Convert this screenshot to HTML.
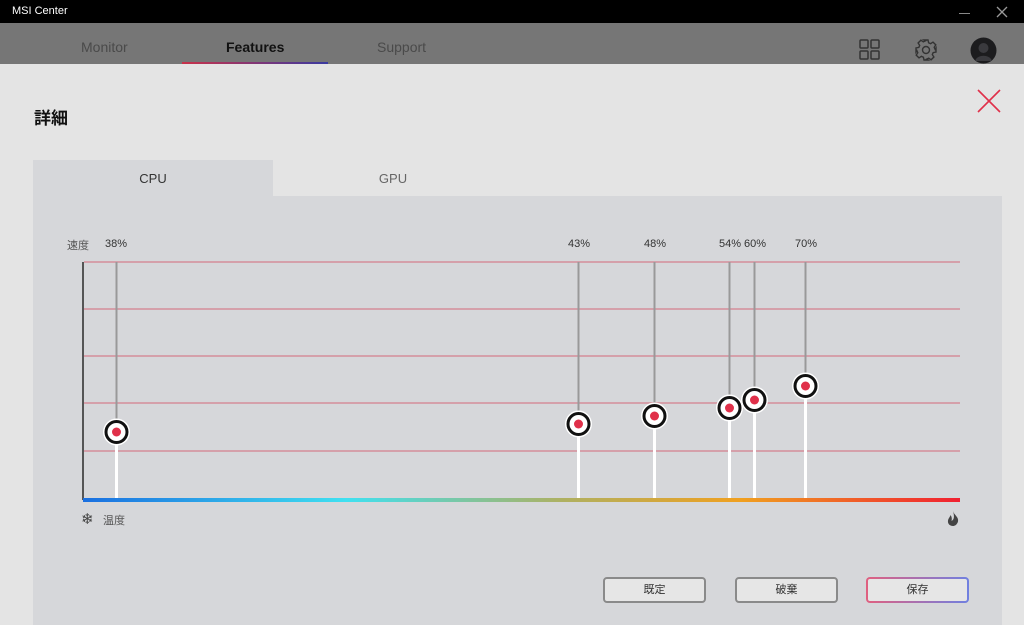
<!DOCTYPE html><html><head><meta charset="utf-8"><style>
*{margin:0;padding:0;box-sizing:border-box}
body{width:1024px;height:625px;overflow:hidden;background:#e4e4e4;font-family:"Liberation Sans","Noto Sans CJK JP",sans-serif;position:relative}
.a{position:absolute}
.g{position:absolute;left:84px;width:876px;height:2px;background:#d5a0aa}
.btn{position:absolute;top:577px;width:103px;height:26px;border:2px solid #8a8a8a;border-radius:4px;background:#e6e6e6;font-size:11px;color:#333;text-align:center;line-height:22px}
</style></head><body>
<div class="a" style="left:0;top:0;width:1024px;height:23px;background:#000"></div>
<div class="a" style="left:12px;top:5px;color:#fff;font-size:11px">MSI Center</div>
<div class="a" style="left:959px;top:13px;width:11px;height:1px;background:#888"></div>
<svg class="a" style="left:996px;top:6px" width="12" height="12"><path d="M1 1L11 11M11 1L1 11" stroke="#999" stroke-width="1.3"/></svg>
<div class="a" style="left:0;top:23px;width:1024px;height:41px;background:#767676"></div>
<div class="a" style="left:81px;top:39px;font-size:14px;color:#4a4a4a">Monitor</div>
<div class="a" style="left:226px;top:39px;font-size:14px;color:#111;font-weight:bold">Features</div>
<div class="a" style="left:377px;top:39px;font-size:14px;color:#4a4a4a">Support</div>
<div class="a" style="left:182px;top:62px;width:146px;height:2px;background:linear-gradient(90deg,#c8324a,#3a3aa0)"></div>
<svg class="a" style="left:858px;top:38px" width="24" height="24"><g fill="none" stroke="#333" stroke-width="1.5"><rect x="2" y="2" width="8" height="8" rx="1"/><rect x="13" y="2" width="8" height="8" rx="1"/><rect x="2" y="13" width="8" height="8" rx="1"/><rect x="13" y="13" width="8" height="8" rx="1"/></g></svg>
<svg class="a" style="left:914px;top:38px" width="24" height="24" viewBox="0 0 24 24"><path fill="none" stroke="#333" stroke-width="1.4" d="M10 2h4l.6 2.8 2 .9 2.4-1.6 2.8 2.8-1.6 2.4.9 2L22 10v4l-2.8.6-.9 2 1.6 2.4-2.8 2.8-2.4-1.6-2 .9L14 22h-4l-.6-2.8-2-.9-2.4 1.6-2.8-2.8 1.6-2.4-.9-2L2 14v-4l2.8-.6.9-2-1.6-2.4 2.8-2.8 2.4 1.6 2-.9z"/><circle cx="12" cy="12" r="3.5" fill="none" stroke="#333" stroke-width="1.4"/></svg>
<svg class="a" style="left:970px;top:37px" width="27" height="27"><circle cx="13.5" cy="13.5" r="13" fill="#1c1c1e"/><circle cx="13.5" cy="11" r="5" fill="#3a3a3e"/><path d="M5 24c2-7 15-7 17 0z" fill="#3a3a3e"/></svg>
<div class="a" style="left:34px;top:104px;font-size:17px;color:#111;font-weight:bold">詳細</div>
<svg class="a" style="left:977px;top:89px" width="24" height="24"><path d="M1 1L23 23M23 1L1 23" stroke="#e0304a" stroke-width="1.6"/></svg>
<div class="a" style="left:33px;top:160px;width:240px;height:36px;background:#d6d7da;text-align:center;line-height:38px;font-size:13px;color:#333">CPU</div>
<div class="a" style="left:273px;top:160px;width:240px;height:36px;text-align:center;line-height:38px;font-size:13px;color:#666">GPU</div>
<div class="a" style="left:33px;top:196px;width:969px;height:429px;background:#d6d7da"></div>
<div class="a" style="left:67px;top:237px;font-size:11px;color:#555">速度</div>
<div class="a" style="left:82px;top:262px;width:2px;height:238px;background:#555"></div>
<div class="g" style="top:261px"></div>
<div class="g" style="top:308px"></div>
<div class="g" style="top:355px"></div>
<div class="g" style="top:402px"></div>
<div class="g" style="top:450px"></div>
<svg class="a" style="left:0;top:230px" width="1024" height="280" font-family="Liberation Sans" font-size="11" fill="#333">
<line x1="116.5" y1="32" x2="116.5" y2="202" stroke="#999" stroke-width="2"/><line x1="116.5" y1="202" x2="116.5" y2="268" stroke="#fff" stroke-width="3"/><circle cx="116.5" cy="202" r="13.5" fill="#fff"/><circle cx="116.5" cy="202" r="10.5" fill="#fff" stroke="#111" stroke-width="3"/><circle cx="116.5" cy="202" r="4.5" fill="#e0304a"/><text x="105" y="17">38%</text>
<line x1="578.5" y1="32" x2="578.5" y2="194" stroke="#999" stroke-width="2"/><line x1="578.5" y1="194" x2="578.5" y2="268" stroke="#fff" stroke-width="3"/><circle cx="578.5" cy="194" r="13.5" fill="#fff"/><circle cx="578.5" cy="194" r="10.5" fill="#fff" stroke="#111" stroke-width="3"/><circle cx="578.5" cy="194" r="4.5" fill="#e0304a"/><text x="568" y="17">43%</text>
<line x1="654.5" y1="32" x2="654.5" y2="186" stroke="#999" stroke-width="2"/><line x1="654.5" y1="186" x2="654.5" y2="268" stroke="#fff" stroke-width="3"/><circle cx="654.5" cy="186" r="13.5" fill="#fff"/><circle cx="654.5" cy="186" r="10.5" fill="#fff" stroke="#111" stroke-width="3"/><circle cx="654.5" cy="186" r="4.5" fill="#e0304a"/><text x="644" y="17">48%</text>
<line x1="729.5" y1="32" x2="729.5" y2="178" stroke="#999" stroke-width="2"/><line x1="729.5" y1="178" x2="729.5" y2="268" stroke="#fff" stroke-width="3"/><circle cx="729.5" cy="178" r="13.5" fill="#fff"/><circle cx="729.5" cy="178" r="10.5" fill="#fff" stroke="#111" stroke-width="3"/><circle cx="729.5" cy="178" r="4.5" fill="#e0304a"/><text x="719" y="17">54%</text>
<line x1="754.5" y1="32" x2="754.5" y2="170" stroke="#999" stroke-width="2"/><line x1="754.5" y1="170" x2="754.5" y2="268" stroke="#fff" stroke-width="3"/><circle cx="754.5" cy="170" r="13.5" fill="#fff"/><circle cx="754.5" cy="170" r="10.5" fill="#fff" stroke="#111" stroke-width="3"/><circle cx="754.5" cy="170" r="4.5" fill="#e0304a"/><text x="744" y="17">60%</text>
<line x1="805.5" y1="32" x2="805.5" y2="156" stroke="#999" stroke-width="2"/><line x1="805.5" y1="156" x2="805.5" y2="268" stroke="#fff" stroke-width="3"/><circle cx="805.5" cy="156" r="13.5" fill="#fff"/><circle cx="805.5" cy="156" r="10.5" fill="#fff" stroke="#111" stroke-width="3"/><circle cx="805.5" cy="156" r="4.5" fill="#e0304a"/><text x="795" y="17">70%</text>
</svg>
<div class="a" style="left:83px;top:498px;width:877px;height:4px;background:linear-gradient(90deg,#1a6fe0,#40e0f0 30%,#b0b060 55%,#f0a020 75%,#f02030)"></div>
<div class="a" style="left:81px;top:510px;font-size:15px;color:#444">❄</div>
<div class="a" style="left:103px;top:512px;font-size:11px;color:#555">温度</div>
<svg class="a" style="left:947px;top:511px" width="12" height="15" viewBox="0 0 12 15"><path d="M6 0C7 4 12 6 11 10.5 10 14 7.5 15 6 15 3 15 .5 13 1 9.5 1.5 7 3 6 3.5 4 5 6 5 8 4.5 10 6.5 9 8 7 6 0z" fill="#444"/></svg>
<div class="btn" style="left:603px">既定</div>
<div class="btn" style="left:735px">破棄</div>
<div class="btn" style="left:866px;border-color:transparent;background:linear-gradient(#e6e6e6,#e6e6e6) padding-box,linear-gradient(90deg,#e06080,#7080e0) border-box">保存</div>
</body></html>
